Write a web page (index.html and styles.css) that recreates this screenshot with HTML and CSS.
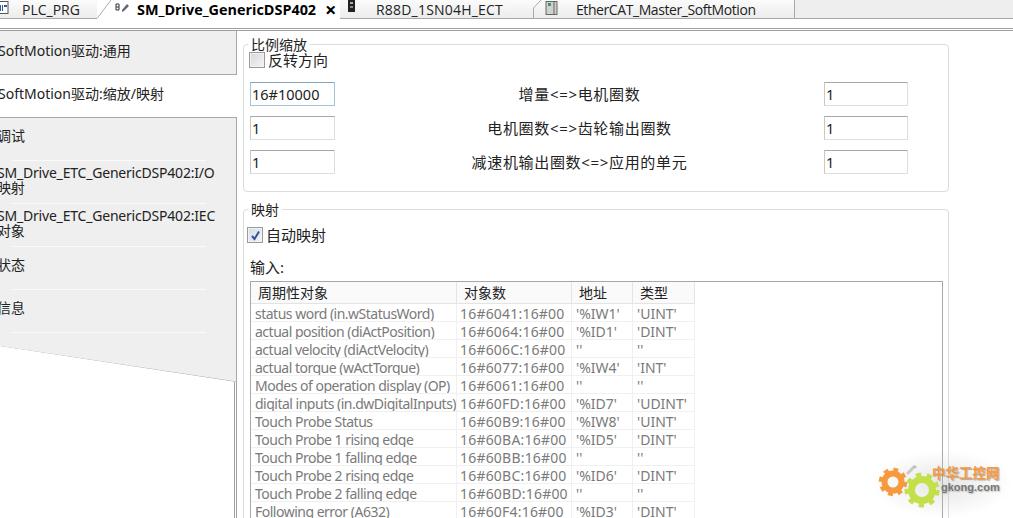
FILE: index.html
```html
<!DOCTYPE html>
<html lang="zh">
<head>
<meta charset="utf-8">
<title>SM_Drive_GenericDSP402</title>
<link rel="stylesheet" href="styles.css">
</head>
<body>
<div class="page">
  <header class="tabbar">
    <div class="tab tab-plc">
      <svg class="tab-icon" width="12" height="14" viewBox="0 0 12 14"><rect x="-4" y="0.5" width="14" height="12" fill="#fff" stroke="#555"/><path d="M1 4h2v6H1zM4 4h1v6H4zM6 4h3v2H6z" fill="#2a5bb0"/></svg>
      <span class="tab-text">PLC_PRG</span>
    </div>
    <div class="tab tab-active">
      <svg class="slant" width="14" height="19" viewBox="0 0 14 19"><path d="M0 18.5L14 0" stroke="#aaa" fill="none"/></svg>
      <svg class="tab-icon" width="15" height="12" viewBox="0 0 15 12"><path d="M1 2h3v6H1zM1 5h3" fill="none" stroke="#333"/><path d="M7 8l5-6 2 2-5 5-2 1z" fill="#667"/></svg>
      <span class="tab-text bold">SM_Drive_GenericDSP402</span>
      <span class="close">×</span>
    </div>
    <div class="tab tab-r88">
      <svg class="tab-icon" width="8" height="14" viewBox="0 0 8 14"><rect x="0" y="0" width="7" height="12" fill="#222"/><rect x="2" y="2" width="3" height="2" fill="#aaa"/><rect x="2" y="6" width="3" height="2" fill="#888"/></svg>
      <span class="tab-text spaced">R88D_1SN04H_ECT</span>
    </div>
    <div class="tab tab-ecat">
      <svg class="slant" width="8" height="19" viewBox="0 0 8 19"><path d="M0.5 19V8L8 0" stroke="#aaa" fill="none"/></svg>
      <svg class="tab-icon" width="14" height="14" viewBox="0 0 14 14"><rect x="1" y="0.5" width="11" height="13" fill="#cfd3cf" stroke="#666"/><rect x="3" y="2" width="3" height="3" fill="#3c9a5f"/><rect x="8" y="1" width="2" height="12" fill="#999"/></svg>
      <span class="tab-text narrow">EtherCAT_Master_SoftMotion</span>
    </div>
    <div class="tab-rest"></div>
  </header>
  <div class="gap-strip"></div>
  <div class="workspace">
    <nav class="sidebar">
      <div class="nav-tab">SoftMotion驱动:通用</div>
      <div class="nav-active">SoftMotion驱动:缩放/映射</div>
      <div class="nav-panel">
        <div class="nav-row">调试</div>
        <div class="nav-row two">SM_Drive_ETC_GenericDSP402:I/O<br>映射</div>
        <div class="nav-row two">SM_Drive_ETC_GenericDSP402:IEC<br>对象</div>
        <div class="nav-row">状态</div>
        <div class="nav-row">信息</div>
        <svg class="diagonal" width="237" height="40" viewBox="0 0 237 40"><path d="M0 0.5L236 36" stroke="#9a9a9a" fill="none"/></svg>
      </div>
      <div class="nav-tail"></div>
    </nav>
    <main class="content">
      <section class="group group-scale">
        <div class="legend">比例缩放</div>
        <label class="check-row check-scale"><span class="box"></span><span class="check-text">反转方向</span></label>
        <div class="ratio-grid">
          <div class="input focus">16#10000</div><div class="ratio-label">增量&lt;=&gt;电机圈数</div><div class="input">1</div>
          <div class="input">1</div><div class="ratio-label">电机圈数&lt;=&gt;齿轮输出圈数</div><div class="input">1</div>
          <div class="input">1</div><div class="ratio-label">减速机输出圈数&lt;=&gt;应用的单元</div><div class="input">1</div>
        </div>
      </section>
      <section class="group group-map">
        <div class="legend">映射</div>
        <label class="check-row check-map"><span class="box checked"><svg width="11" height="11" viewBox="0 0 11 11"><path d="M2 6l2.5 3L9 1.5" fill="none" stroke="#3a4f9c" stroke-width="2"/></svg></span><span class="check-text">自动映射</span></label>
        <div class="input-title">输入:</div>
        <div class="table-box">
          <div class="row head"><div class="cell">周期性对象</div><div class="cell">对象数</div><div class="cell">地址</div><div class="cell">类型</div></div>
          <div class="row"><div class="cell">status word (in.wStatusWord)</div><div class="cell">16#6041:16#00</div><div class="cell">'%IW1'</div><div class="cell">'UINT'</div></div>
          <div class="row"><div class="cell">actual position (diActPosition)</div><div class="cell">16#6064:16#00</div><div class="cell">'%ID1'</div><div class="cell">'DINT'</div></div>
          <div class="row"><div class="cell">actual velocity (diActVelocity)</div><div class="cell">16#606C:16#00</div><div class="cell">''</div><div class="cell">''</div></div>
          <div class="row"><div class="cell">actual torque (wActTorque)</div><div class="cell">16#6077:16#00</div><div class="cell">'%IW4'</div><div class="cell">'INT'</div></div>
          <div class="row"><div class="cell">Modes of operation display (OP)</div><div class="cell">16#6061:16#00</div><div class="cell">''</div><div class="cell">''</div></div>
          <div class="row"><div class="cell">digital inputs (in.dwDigitalInputs)</div><div class="cell">16#60FD:16#00</div><div class="cell">'%ID7'</div><div class="cell">'UDINT'</div></div>
          <div class="row"><div class="cell">Touch Probe Status</div><div class="cell">16#60B9:16#00</div><div class="cell">'%IW8'</div><div class="cell">'UINT'</div></div>
          <div class="row"><div class="cell">Touch Probe 1 rising edge</div><div class="cell">16#60BA:16#00</div><div class="cell">'%ID5'</div><div class="cell">'DINT'</div></div>
          <div class="row"><div class="cell">Touch Probe 1 falling edge</div><div class="cell">16#60BB:16#00</div><div class="cell">''</div><div class="cell">''</div></div>
          <div class="row"><div class="cell">Touch Probe 2 rising edge</div><div class="cell">16#60BC:16#00</div><div class="cell">'%ID6'</div><div class="cell">'DINT'</div></div>
          <div class="row"><div class="cell">Touch Probe 2 falling edge</div><div class="cell">16#60BD:16#00</div><div class="cell">''</div><div class="cell">''</div></div>
          <div class="row"><div class="cell">Following error (A632)</div><div class="cell">16#60F4:16#00</div><div class="cell">'%ID3'</div><div class="cell">'DINT'</div></div>
        </div>
      </section>
    </main>
  </div>
  <div class="watermark">
    <svg class="gears" width="66" height="50" viewBox="0 0 66 50">
      <path d="M30 12l8-8" stroke="#c9c9c9" stroke-width="3" fill="none"/>
      <path d="M38 3l2 3-4 0z" fill="#bbb"/>
      <circle cx="16" cy="20" r="8.5" fill="none" stroke="#f79a3e" stroke-width="6"/>
      <circle cx="16" cy="20" r="12" fill="none" stroke="#f79a3e" stroke-width="4.5" stroke-dasharray="4.7 4.72"/>
      <circle cx="45" cy="28" r="10.5" fill="none" stroke="#c3e04a" stroke-width="7"/>
      <circle cx="45" cy="28" r="15" fill="none" stroke="#c3e04a" stroke-width="5" stroke-dasharray="5.2 5.51"/>
    </svg>
    <div class="wm-cn">中华工控网</div>
    <div class="wm-en">gkong.com</div>
  </div>
</div>
</body>
</html>
```
FILE: styles.css
```css
* { box-sizing: border-box; }
html, body { margin: 0; padding: 0; background: #fff; }
body { width: 1013px; height: 518px; overflow: hidden; }
.page {
  position: relative;
  width: 1013px;
  height: 518px;
  overflow: hidden;
  font-family: "Noto Sans", "Noto Sans CJK SC", sans-serif;
  font-size: 14px;
  color: #222;
}

/* tab bar */
.tabbar {
  display: flex;
  height: 19px;
  border-bottom: 1px solid #a8a8a8;
  background: #fff;
}
.tab {
  position: relative;
  display: flex;
  align-items: center;
  height: 18px;
  background: linear-gradient(#fbfbfb, #ececec);
  font-family: "Open Sans", "Noto Sans", sans-serif;
  font-size: 14px;
  color: #222;
  white-space: nowrap;
}
.tab-text { display: block; }
.bold { font-weight: 700; color: #000; font-size: 14.4px; }
.narrow { letter-spacing: -.42px; }
.spaced { letter-spacing: .2px; }
.tab-plc { width: 97px; }
.tab-plc .tab-icon { margin: 0 12px 3px -2px; }
.tab-active {
  width: 243px;
  height: 19px;
  background: #fff;
  z-index: 1;
}
.tab-active .slant { margin-right: 4px; }
.tab-active .tab-icon { margin: 0 7px 4px 0; }
.tab-active .tab-text { width: 188px; }
.close { font-weight: 700; font-size: 20px; color: #000; line-height: 18px; }
.tab-r88 { width: 193px; }
.tab-r88 .tab-icon { margin: 0 20px 4px 8px; }
.tab-ecat { width: 262px; border-right: 1px solid #aaa; }
.tab-ecat .tab-icon { margin: 0 17px 2px 4px; }
.tab-rest { flex: 1; height: 18px; background: #eee; }

.gap-strip {
  height: 12px;
  border-bottom: 3px double #a0a0a0;
}

/* left navigation */
.workspace { display: flex; height: 487px; }
.sidebar { width: 237px; flex: none; display: flex; flex-direction: column; }
.nav-tab {
  height: 44px;
  background: #efefef;
  border-right: 1px solid #a8a8a8;
  border-bottom: 1px solid #a8a8a8;
  line-height: 40px;
  text-indent: -2px;
  white-space: nowrap;
}
.nav-active {
  height: 42px;
  line-height: 38px;
  text-indent: -2px;
  white-space: nowrap;
  background: #fff;
}
.nav-panel {
  position: relative;
  height: 265px;
  flex: none;
  background: #efefef;
  border-top: 1px solid #a8a8a8;
  border-right: 1px solid #a8a8a8;
  clip-path: polygon(0 0, 100% 0, 100% 100%, 0 229px);
}
.nav-row {
  position: relative;
  height: 43px;
  margin-left: -3px;
  line-height: 36px;
  white-space: nowrap;
}
.nav-row::after {
  content: "";
  position: absolute;
  left: 15px;
  right: 30px;
  bottom: 0;
  height: 1px;
  background: #fafafa;
}
.nav-row.two { line-height: 15px; padding-top: 4px; letter-spacing: -.2px; }
.diagonal { position: absolute; left: 0; top: 228px; }
.nav-tail { flex: 1; border-right: 3px double #a0a0a0; }

/* content */
.content {
  flex: 1;
  min-width: 0;
  padding: 13px 64px 0 6px;
  display: flex;
  flex-direction: column;
  gap: 17px;
}
.group {
  position: relative;
  border: 1px solid #dcdcdc;
  border-radius: 4px;
  flex: none;
}
.legend {
  position: absolute;
  left: 4px;
  top: -8px;
  padding: 0 3px;
  background: #fff;
  line-height: 16px;
  color: #222;
}
.group-scale { height: 148px; padding: 37px 40px 0 6px; }
.group-map { height: 320px; padding: 16px 5px 0 6px; }
.check-row { display: flex; align-items: center; white-space: nowrap; }
.check-scale {
  position: absolute;
  left: 5px;
  top: 6px;
  gap: 3px;
}
.check-text { font-size: 15px; line-height: 18px; }
.box {
  display: flex;
  align-items: center;
  justify-content: center;
  width: 16px;
  height: 16px;
  border: 1px solid #9a9a9a;
  background: linear-gradient(135deg, #d8d8d8, #f4f4f4);
  box-shadow: inset 0 0 0 1px #f2f2f2;
}
.checked { background: linear-gradient(135deg, #d5dbe6, #f2f4f8); }
.check-map { gap: 3px; margin-left: -3px; height: 18px; }
.input-title { margin-top: 15px; line-height: 16px; font-size: 15px; }
.ratio-grid {
  display: grid;
  grid-template-columns: 85px 1fr 84px;
  grid-auto-rows: 24px;
  row-gap: 10px;
  align-items: center;
}
.ratio-label { text-align: center; font-size: 15px; letter-spacing: .67px; line-height: 24px; height: 24px; }
.input {
  height: 24px;
  border: 1px solid #dedede;
  border-top-color: #a8a8a8;
  border-left-color: #c8c8c8;
  line-height: 22px;
  padding-left: 1px;
  font-size: 14.5px;
  color: #222;
  background: #fff;
}
.input.focus { border-color: #a3c4d8; border-top-color: #7fa6bd; }

/* mapping table */
.table-box {
  margin-top: 6px;
  height: 300px;
  overflow: hidden;
  border: 1px solid #a8a8a8;
}
.row {
  display: grid;
  grid-template-columns: 206px 115px 61px 62px;
  width: 444px;
  height: 18px;
  color: #7a7a7a;
}
.cell {
  height: 18px;
  overflow: hidden;
  white-space: nowrap;
  padding: 2px 0 0 4px;
  line-height: 16px;
  border-right: 1px solid #f0f0f0;
  border-bottom: 1px solid #f0f0f0;
}
.row .cell:first-child { letter-spacing: -.5px; }
.row .cell:nth-child(2) { letter-spacing: .2px; padding-left: 3px; }
.row.head { height: 22px; color: #222; background: #fafafa; }
.head .cell {
  height: 22px;
  padding: 3px 0 0 7px;
  border-color: #e4e4e4;
}
.row.head .cell:first-child, .row.head .cell:nth-child(2) { letter-spacing: 0; padding-left: 7px; }

/* watermark */
.watermark {
  position: absolute;
  left: 872px;
  top: 450px;
  width: 141px;
  height: 68px;
  background: radial-gradient(ellipse at center, rgba(190,190,190,.4), rgba(255,255,255,0) 70%);
}
.gears { position: absolute; left: 5px; top: 12px; filter: blur(.4px); }
.wm-cn {
  position: absolute;
  left: 60px;
  top: 14px;
  font-family: "Noto Sans CJK SC", sans-serif;
  font-weight: 700;
  font-size: 13.5px;
  line-height: 16px;
  color: #f79a3e;
  text-shadow: 1px 1px 1px rgba(120,120,120,.6);
  white-space: nowrap;
}
.wm-en {
  position: absolute;
  left: 69px;
  top: 30px;
  font-family: "Liberation Sans", sans-serif;
  font-weight: 700;
  font-size: 11px;
  line-height: 14px;
  color: #777;
  text-shadow: 1px 1px 1px rgba(160,160,160,.6);
  white-space: nowrap;
}
```
